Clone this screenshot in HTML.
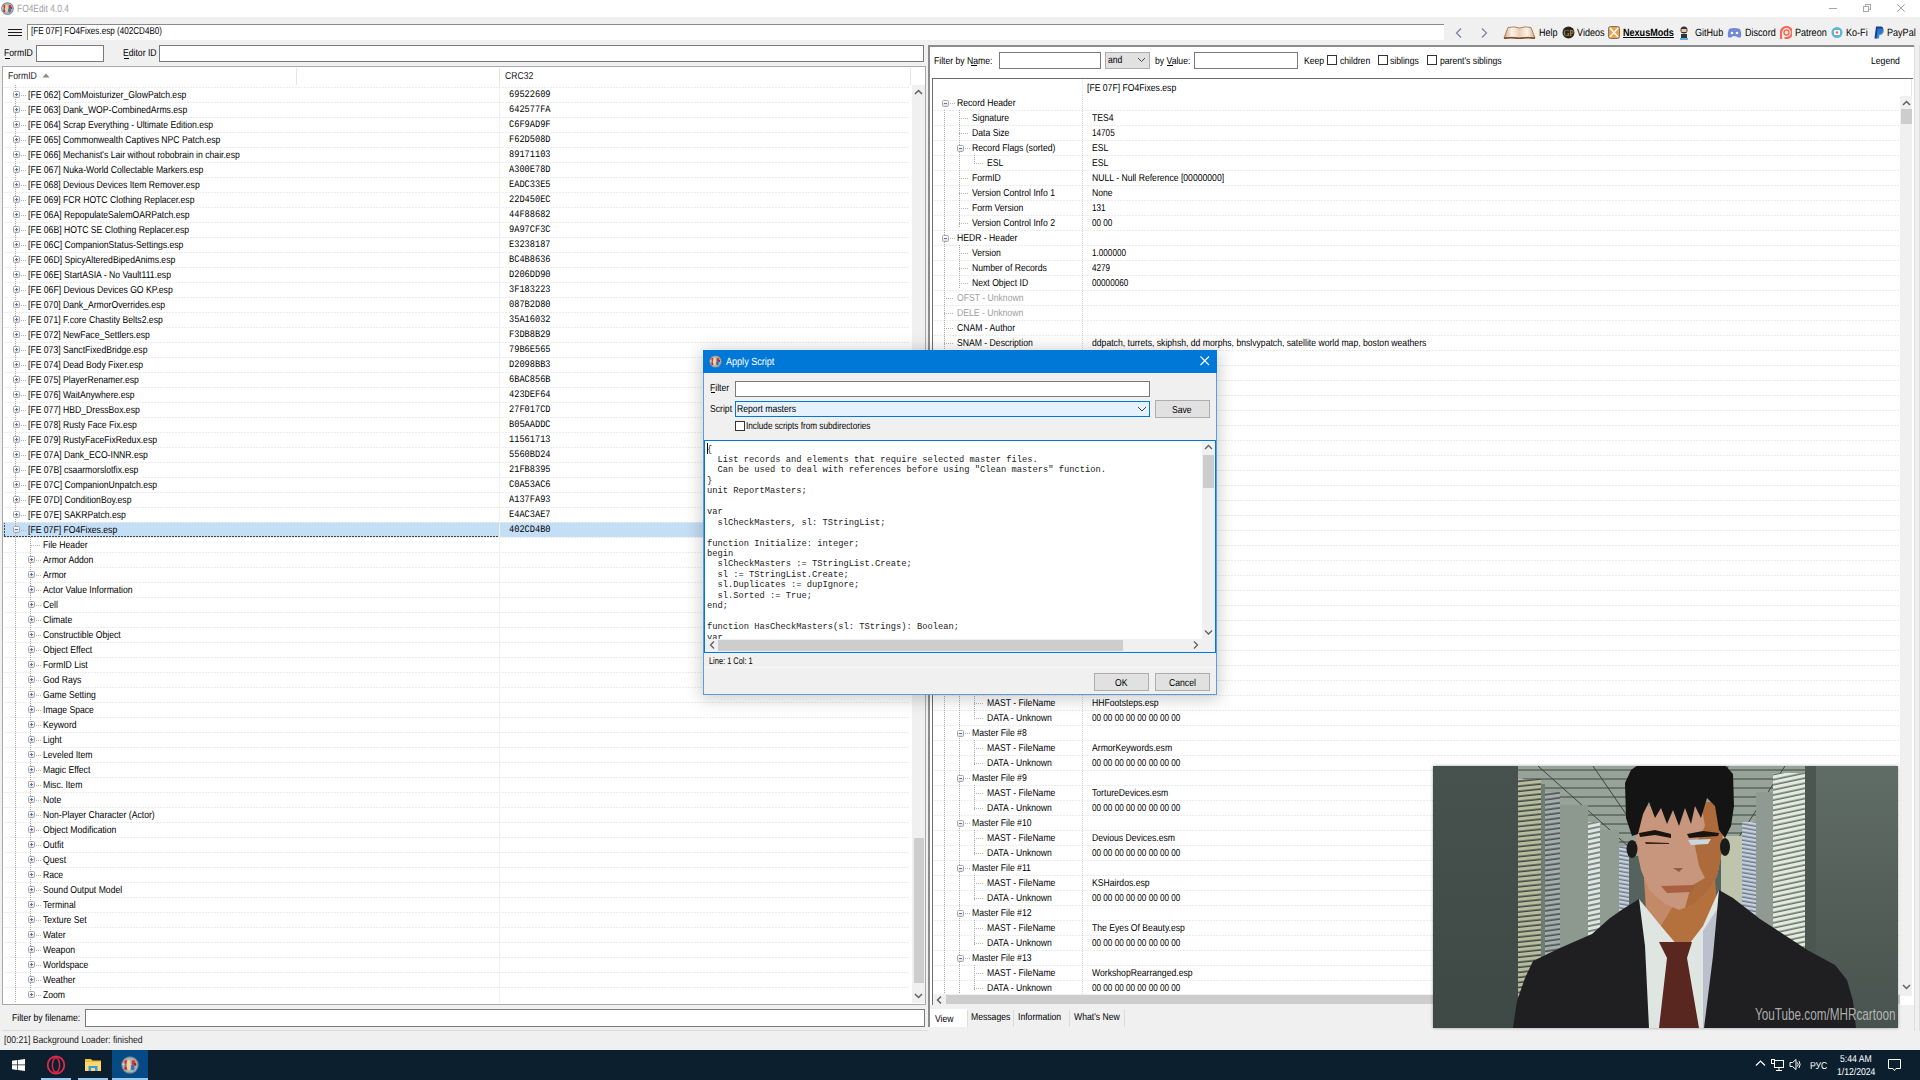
<!DOCTYPE html><html><head><meta charset="utf-8"><style>
*{margin:0;padding:0;box-sizing:border-box}
html,body{width:1920px;height:1080px;overflow:hidden;background:#f0f0f0;position:relative;font-family:"Liberation Sans",sans-serif;font-size:10px;color:#000}
.t{position:absolute;white-space:nowrap;font-size:10px;transform:scaleX(0.863);transform-origin:0 0;text-rendering:geometricPrecision;margin-top:1.4px}
.m{position:absolute;white-space:nowrap;font-family:"Liberation Mono",monospace;font-size:10px;transform:scaleX(0.865);transform-origin:0 0;color:#000;text-rendering:geometricPrecision;margin-top:0.5px}
.c{position:absolute;white-space:pre;font-family:"Liberation Mono",monospace;font-size:9px;line-height:10.45px;transform:scaleX(0.972);transform-origin:0 0;color:#222}
.inp{position:absolute;background:#fff;border:1px solid #7a7a7a}
.btn{position:absolute;background:#e1e1e1;border:1px solid #adadad}
.hd{position:absolute;height:1px;background-image:repeating-linear-gradient(90deg,#ececec 0 2px,transparent 2px 3px)}
.vd{position:absolute;width:1px;background-image:repeating-linear-gradient(180deg,#a8a8a8 0 1px,transparent 1px 2px)}
.hl{position:absolute;height:1px;background-image:repeating-linear-gradient(90deg,#b4b4b4 0 1px,transparent 1px 2px)}
.box{position:absolute;z-index:2;width:7px;height:7px;border:1px solid #a8a8a8;border-radius:1.5px;background:linear-gradient(#fff,#dedede)}
.box:before{content:"";position:absolute;left:1px;top:2px;width:3px;height:1px;background:#5a70b0}
.box.p:after{content:"";position:absolute;left:2px;top:1px;width:1px;height:3px;background:#5a70b0}
.chk{position:absolute;width:10px;height:10px;border:1px solid #333;background:#fff}
</style></head><body>
<div style="position:absolute;left:0px;top:0px;width:1920px;height:17px;background:#fff"></div>
<svg style="position:absolute;left:1px;top:2px" width="13" height="13" viewBox="0 0 26 26"><circle cx="13" cy="13" r="12.6" fill="#6f7f86"/><circle cx="13" cy="13" r="11" fill="#a3b4bc"/><rect x="5" y="6" width="4.5" height="6" rx="1.5" fill="#e22b2b"/><rect x="5" y="12" width="4.5" height="3" fill="#4a78b8"/><rect x="5" y="15" width="4.5" height="5" rx="1" fill="#d42424"/><ellipse cx="11" cy="13" rx="3" ry="8" fill="#eed69a"/><rect x="15.5" y="6" width="5" height="7" rx="2" fill="#dd3030"/><rect x="14.5" y="12.5" width="5" height="8" rx="2" fill="#3f6fb5"/><rect x="19" y="10" width="3" height="4" rx="1.5" fill="#a01818"/><circle cx="3.5" cy="12" r="2" fill="#d8c0a0"/></svg>
<div class="t" style="left:17px;top:0.5px;line-height:15px;color:#a0a0a0;font-size:10.5px;transform:scaleX(0.8)">FO4Edit 4.0.4</div>
<div style="position:absolute;left:1829px;top:7.5px;width:8px;height:1px;background:#a8a8a8"></div>
<div style="position:absolute;left:1863px;top:4px;width:8px;height:8px"><div style="position:absolute;left:2px;top:0;width:6px;height:6px;border:1px solid #a8a8a8"></div><div style="position:absolute;left:0;top:2px;width:6px;height:6px;border:1px solid #a8a8a8;background:#fff"></div></div>
<svg style="position:absolute;left:1897px;top:4px" width="8" height="8"><path d="M0.3 0.3L7.7 7.7M7.7 0.3L0.3 7.7" stroke="#a0a0a0" stroke-width="1"/></svg>
<div style="position:absolute;left:8px;top:29px;width:14px;height:1.4px;background:#1a1a1a"></div>
<div style="position:absolute;left:8px;top:32px;width:14px;height:1.4px;background:#1a1a1a"></div>
<div style="position:absolute;left:8px;top:35px;width:14px;height:1.4px;background:#1a1a1a"></div>
<div style="position:absolute;left:27px;top:24px;width:1417px;height:16px;background:#fff;border-left:1px solid #8a8a8a;border-top:1px solid #8a8a8a"></div>
<div class="t" style="left:31px;top:23px;line-height:15px;transform:scaleX(0.81)">[FE 07F] FO4Fixes.esp (402CD4B0)</div>
<svg style="position:absolute;left:1454px;top:27px" width="10" height="12"><path d="M7 1.5L2.5 6L7 10.5" stroke="#7a7fa8" stroke-width="1.2" fill="none"/></svg>
<svg style="position:absolute;left:1479px;top:27px" width="10" height="12"><path d="M3 1.5L7.5 6L3 10.5" stroke="#7a7fa8" stroke-width="1.2" fill="none"/></svg>
<svg style="position:absolute;left:1503px;top:26px" width="33" height="13" viewBox="0 0 33 13"><defs><linearGradient id="bk" x1="0" y1="0" x2="1" y2="0"><stop offset="0" stop-color="#d8a878"/><stop offset="0.25" stop-color="#fbf3ea"/><stop offset="0.5" stop-color="#e8d0b8"/><stop offset="0.75" stop-color="#fbf3ea"/><stop offset="1" stop-color="#d8a878"/></linearGradient></defs><path d="M1 12 L5 1.5 Q11 0 16.5 2 Q22 0 28 1.5 L32 12 Q24 10.5 16.5 12 Q9 10.5 1 12Z" fill="url(#bk)" stroke="#9a6840" stroke-width="0.8"/><path d="M1 12.3 Q9 11 16.5 12.6 Q24 11 32 12.3" stroke="#7a4a28" stroke-width="1.5" fill="none"/></svg>
<div class="t" style="left:1539px;top:25px;line-height:15px;font-size:10.5px">Help</div>
<svg style="position:absolute;left:1562px;top:26px" width="13" height="13"><circle cx="6.5" cy="6.5" r="6" fill="#2a2420"/><text x="6.5" y="9.5" font-size="8" text-anchor="middle" fill="#c8a860" font-family="Liberation Serif">GP</text></svg>
<div class="t" style="left:1577px;top:25px;line-height:15px;font-size:10.5px">Videos</div>
<svg style="position:absolute;left:1608px;top:26px" width="12" height="13"><rect x="0.5" y="0.5" width="11" height="12" rx="2" fill="#f5a040" stroke="#777"/><path d="M2 2L10 11M10 2L2 11" stroke="#fff" stroke-width="1.5"/></svg>
<div class="t" style="left:1623px;top:25px;line-height:15px;font-size:10.5px;font-weight:bold;text-decoration:underline">NexusMods</div>
<svg style="position:absolute;left:1678px;top:25px" width="12" height="15"><circle cx="6" cy="5" r="3.5" fill="#333"/><rect x="3.5" y="4" width="5" height="3" fill="#f0c8a8"/><rect x="3" y="9" width="6" height="4" fill="#333"/><rect x="2" y="13" width="8" height="2" fill="#5ab0e0"/></svg>
<div class="t" style="left:1695px;top:25px;line-height:15px;font-size:10.5px">GitHub</div>
<svg style="position:absolute;left:1727px;top:27px" width="15" height="11"><path d="M2 2Q7 0 13 2Q15 6 14 10Q12 11 10 10L9 9Q7.5 9.5 6 9L5 10Q3 11 1 10Q0 6 2 2Z" fill="#7289da"/><circle cx="5" cy="6" r="1.3" fill="#fff"/><circle cx="10" cy="6" r="1.3" fill="#fff"/></svg>
<div class="t" style="left:1745px;top:25px;line-height:15px;font-size:10.5px">Discord</div>
<svg style="position:absolute;left:1780px;top:26px" width="12" height="14"><path d="M1 13V6.5A5.5 5.5 0 1 1 6.5 12H4.5" fill="none" stroke="#f96854" stroke-width="2.2"/><circle cx="6.5" cy="6.5" r="2.5" fill="none" stroke="#f96854" stroke-width="1.4"/></svg>
<div class="t" style="left:1795px;top:25px;line-height:15px;font-size:10.5px">Patreon</div>
<svg style="position:absolute;left:1831px;top:26px" width="12" height="13"><circle cx="6" cy="6.5" r="5.5" fill="#5cb8d8"/><rect x="3" y="4" width="6" height="5" rx="1" fill="#fff"/><circle cx="6" cy="6.5" r="1.3" fill="#ff5e5b"/></svg>
<div class="t" style="left:1846px;top:25px;line-height:15px;font-size:10.5px">Ko-Fi</div>
<svg style="position:absolute;left:1874px;top:26px" width="10" height="13"><path d="M2 0.5H7Q10 1 9 4.5Q8 7.5 5 7.5H4L3 12.5H0.5Z" fill="#1a3a8a"/><path d="M3.5 2.5H8Q10.5 3 9.5 6Q8.5 9 6 9H5.5L4.8 12.5H2.3Z" fill="#2a80d0" opacity="0.9"/></svg>
<div class="t" style="left:1887px;top:25px;line-height:15px;font-size:10.5px">PayPal</div>
<div class="t" style="left:4px;top:45px;line-height:15px;">FormID</div>
<div style="position:absolute;left:5px;top:58px;width:5px;height:1px;background:#000"></div>
<div class="inp" style="left:36px;top:45px;width:68px;height:17px"></div>
<div class="t" style="left:123px;top:45px;line-height:15px;">Editor ID</div>
<div style="position:absolute;left:124px;top:58px;width:5px;height:1px;background:#000"></div>
<div class="inp" style="left:159px;top:45px;width:765px;height:17px"></div>
<div style="position:absolute;left:2px;top:66px;width:924px;height:939px;background:#fff;border:1px solid #a9a9a9"></div>
<div class="t" style="left:8px;top:68px;line-height:15px;color:#1a1a1a;">FormID</div>
<svg style="position:absolute;left:42px;top:73px" width="8" height="5"><path d="M0.5 4.5L4 0.5L7.5 4.5Z" fill="#888"/></svg>
<div style="position:absolute;left:296px;top:68px;width:1px;height:17px;background:#e5e5e5"></div>
<div style="position:absolute;left:499px;top:68px;width:1px;height:17px;background:#e5e5e5"></div>
<div style="position:absolute;left:910px;top:68px;width:1px;height:17px;background:#e5e5e5"></div>
<div class="t" style="left:505px;top:68px;line-height:15px;color:#1a1a1a;">CRC32</div>
<div style="position:absolute;left:3px;top:85px;width:909px;height:918px;overflow:hidden">
<div style="position:absolute;left:0px;top:437px;width:909px;height:15px;background:#c4def5"></div>
<div class="hd" style="left:1px;top:437px;width:495px;background-image:repeating-linear-gradient(90deg,#444 0 2px,transparent 2px 3px)"></div>
<div class="hd" style="left:1px;top:451px;width:495px;background-image:repeating-linear-gradient(90deg,#444 0 2px,transparent 2px 3px)"></div>
<div class="vd" style="left:1px;top:437px;height:15px;background-image:repeating-linear-gradient(180deg,#444 0 2px,transparent 2px 3px)"></div>
<div class="vd" style="left:496px;top:437px;height:15px;background-image:repeating-linear-gradient(180deg,#444 0 2px,transparent 2px 3px)"></div>
<div style="position:absolute;left:496px;top:0px;width:1px;height:918px;background:#f0f0f0"></div>
<div class="hd" style="left:1px;top:-13px;width:906px"></div>
<div class="hd" style="left:1px;top:2px;width:906px"></div>
<div class="hd" style="left:1px;top:17px;width:906px"></div>
<div class="hd" style="left:1px;top:32px;width:906px"></div>
<div class="hd" style="left:1px;top:47px;width:906px"></div>
<div class="hd" style="left:1px;top:62px;width:906px"></div>
<div class="hd" style="left:1px;top:77px;width:906px"></div>
<div class="hd" style="left:1px;top:92px;width:906px"></div>
<div class="hd" style="left:1px;top:107px;width:906px"></div>
<div class="hd" style="left:1px;top:122px;width:906px"></div>
<div class="hd" style="left:1px;top:137px;width:906px"></div>
<div class="hd" style="left:1px;top:152px;width:906px"></div>
<div class="hd" style="left:1px;top:167px;width:906px"></div>
<div class="hd" style="left:1px;top:182px;width:906px"></div>
<div class="hd" style="left:1px;top:197px;width:906px"></div>
<div class="hd" style="left:1px;top:212px;width:906px"></div>
<div class="hd" style="left:1px;top:227px;width:906px"></div>
<div class="hd" style="left:1px;top:242px;width:906px"></div>
<div class="hd" style="left:1px;top:257px;width:906px"></div>
<div class="hd" style="left:1px;top:272px;width:906px"></div>
<div class="hd" style="left:1px;top:287px;width:906px"></div>
<div class="hd" style="left:1px;top:302px;width:906px"></div>
<div class="hd" style="left:1px;top:317px;width:906px"></div>
<div class="hd" style="left:1px;top:332px;width:906px"></div>
<div class="hd" style="left:1px;top:347px;width:906px"></div>
<div class="hd" style="left:1px;top:362px;width:906px"></div>
<div class="hd" style="left:1px;top:377px;width:906px"></div>
<div class="hd" style="left:1px;top:392px;width:906px"></div>
<div class="hd" style="left:1px;top:407px;width:906px"></div>
<div class="hd" style="left:1px;top:422px;width:906px"></div>
<div class="hd" style="left:1px;top:437px;width:906px"></div>
<div class="hd" style="left:1px;top:452px;width:906px"></div>
<div class="hd" style="left:1px;top:467px;width:906px"></div>
<div class="hd" style="left:1px;top:482px;width:906px"></div>
<div class="hd" style="left:1px;top:497px;width:906px"></div>
<div class="hd" style="left:1px;top:512px;width:906px"></div>
<div class="hd" style="left:1px;top:527px;width:906px"></div>
<div class="hd" style="left:1px;top:542px;width:906px"></div>
<div class="hd" style="left:1px;top:557px;width:906px"></div>
<div class="hd" style="left:1px;top:572px;width:906px"></div>
<div class="hd" style="left:1px;top:587px;width:906px"></div>
<div class="hd" style="left:1px;top:602px;width:906px"></div>
<div class="hd" style="left:1px;top:617px;width:906px"></div>
<div class="hd" style="left:1px;top:632px;width:906px"></div>
<div class="hd" style="left:1px;top:647px;width:906px"></div>
<div class="hd" style="left:1px;top:662px;width:906px"></div>
<div class="hd" style="left:1px;top:677px;width:906px"></div>
<div class="hd" style="left:1px;top:692px;width:906px"></div>
<div class="hd" style="left:1px;top:707px;width:906px"></div>
<div class="hd" style="left:1px;top:722px;width:906px"></div>
<div class="hd" style="left:1px;top:737px;width:906px"></div>
<div class="hd" style="left:1px;top:752px;width:906px"></div>
<div class="hd" style="left:1px;top:767px;width:906px"></div>
<div class="hd" style="left:1px;top:782px;width:906px"></div>
<div class="hd" style="left:1px;top:797px;width:906px"></div>
<div class="hd" style="left:1px;top:812px;width:906px"></div>
<div class="hd" style="left:1px;top:827px;width:906px"></div>
<div class="hd" style="left:1px;top:842px;width:906px"></div>
<div class="hd" style="left:1px;top:857px;width:906px"></div>
<div class="hd" style="left:1px;top:872px;width:906px"></div>
<div class="hd" style="left:1px;top:887px;width:906px"></div>
<div class="hd" style="left:1px;top:902px;width:906px"></div>
<div class="vd" style="left:12px;top:0px;height:918px"></div>
<div class="vd" style="left:27px;top:452px;height:458px"></div>
<div class="box p" style="left:10px;top:6px"></div>
<div class="hl" style="left:18px;top:10px;width:5px"></div>
<div class="t" style="left:25px;top:2px;line-height:15px;">[FE 062] ComMoisturizer_GlowPatch.esp</div>
<div class="m" style="left:506px;top:2px;line-height:15px">69522609</div>
<div class="box p" style="left:10px;top:21px"></div>
<div class="hl" style="left:18px;top:25px;width:5px"></div>
<div class="t" style="left:25px;top:17px;line-height:15px;">[FE 063] Dank_WOP-CombinedArms.esp</div>
<div class="m" style="left:506px;top:17px;line-height:15px">642577FA</div>
<div class="box p" style="left:10px;top:36px"></div>
<div class="hl" style="left:18px;top:40px;width:5px"></div>
<div class="t" style="left:25px;top:32px;line-height:15px;">[FE 064] Scrap Everything - Ultimate Edition.esp</div>
<div class="m" style="left:506px;top:32px;line-height:15px">C6F9AD9F</div>
<div class="box p" style="left:10px;top:51px"></div>
<div class="hl" style="left:18px;top:55px;width:5px"></div>
<div class="t" style="left:25px;top:47px;line-height:15px;">[FE 065] Commonwealth Captives NPC Patch.esp</div>
<div class="m" style="left:506px;top:47px;line-height:15px">F62D508D</div>
<div class="box p" style="left:10px;top:66px"></div>
<div class="hl" style="left:18px;top:70px;width:5px"></div>
<div class="t" style="left:25px;top:62px;line-height:15px;">[FE 066] Mechanist&#x27;s Lair without robobrain in chair.esp</div>
<div class="m" style="left:506px;top:62px;line-height:15px">89171103</div>
<div class="box p" style="left:10px;top:81px"></div>
<div class="hl" style="left:18px;top:85px;width:5px"></div>
<div class="t" style="left:25px;top:77px;line-height:15px;">[FE 067] Nuka-World Collectable Markers.esp</div>
<div class="m" style="left:506px;top:77px;line-height:15px">A300E78D</div>
<div class="box p" style="left:10px;top:96px"></div>
<div class="hl" style="left:18px;top:100px;width:5px"></div>
<div class="t" style="left:25px;top:92px;line-height:15px;">[FE 068] Devious Devices Item Remover.esp</div>
<div class="m" style="left:506px;top:92px;line-height:15px">EADC33E5</div>
<div class="box p" style="left:10px;top:111px"></div>
<div class="hl" style="left:18px;top:115px;width:5px"></div>
<div class="t" style="left:25px;top:107px;line-height:15px;">[FE 069] FCR HOTC Clothing Replacer.esp</div>
<div class="m" style="left:506px;top:107px;line-height:15px">22D450EC</div>
<div class="box p" style="left:10px;top:126px"></div>
<div class="hl" style="left:18px;top:130px;width:5px"></div>
<div class="t" style="left:25px;top:122px;line-height:15px;">[FE 06A] RepopulateSalemOARPatch.esp</div>
<div class="m" style="left:506px;top:122px;line-height:15px">44F88682</div>
<div class="box p" style="left:10px;top:141px"></div>
<div class="hl" style="left:18px;top:145px;width:5px"></div>
<div class="t" style="left:25px;top:137px;line-height:15px;">[FE 06B] HOTC SE Clothing Replacer.esp</div>
<div class="m" style="left:506px;top:137px;line-height:15px">9A97CF3C</div>
<div class="box p" style="left:10px;top:156px"></div>
<div class="hl" style="left:18px;top:160px;width:5px"></div>
<div class="t" style="left:25px;top:152px;line-height:15px;">[FE 06C] CompanionStatus-Settings.esp</div>
<div class="m" style="left:506px;top:152px;line-height:15px">E3238187</div>
<div class="box p" style="left:10px;top:171px"></div>
<div class="hl" style="left:18px;top:175px;width:5px"></div>
<div class="t" style="left:25px;top:167px;line-height:15px;">[FE 06D] SpicyAlteredBipedAnims.esp</div>
<div class="m" style="left:506px;top:167px;line-height:15px">BC4B8636</div>
<div class="box p" style="left:10px;top:186px"></div>
<div class="hl" style="left:18px;top:190px;width:5px"></div>
<div class="t" style="left:25px;top:182px;line-height:15px;">[FE 06E] StartASIA - No Vault111.esp</div>
<div class="m" style="left:506px;top:182px;line-height:15px">D206DD90</div>
<div class="box p" style="left:10px;top:201px"></div>
<div class="hl" style="left:18px;top:205px;width:5px"></div>
<div class="t" style="left:25px;top:197px;line-height:15px;">[FE 06F] Devious Devices GO KP.esp</div>
<div class="m" style="left:506px;top:197px;line-height:15px">3F183223</div>
<div class="box p" style="left:10px;top:216px"></div>
<div class="hl" style="left:18px;top:220px;width:5px"></div>
<div class="t" style="left:25px;top:212px;line-height:15px;">[FE 070] Dank_ArmorOverrides.esp</div>
<div class="m" style="left:506px;top:212px;line-height:15px">087B2D80</div>
<div class="box p" style="left:10px;top:231px"></div>
<div class="hl" style="left:18px;top:235px;width:5px"></div>
<div class="t" style="left:25px;top:227px;line-height:15px;">[FE 071] F.core Chastity Belts2.esp</div>
<div class="m" style="left:506px;top:227px;line-height:15px">35A16032</div>
<div class="box p" style="left:10px;top:246px"></div>
<div class="hl" style="left:18px;top:250px;width:5px"></div>
<div class="t" style="left:25px;top:242px;line-height:15px;">[FE 072] NewFace_Settlers.esp</div>
<div class="m" style="left:506px;top:242px;line-height:15px">F3DB8B29</div>
<div class="box p" style="left:10px;top:261px"></div>
<div class="hl" style="left:18px;top:265px;width:5px"></div>
<div class="t" style="left:25px;top:257px;line-height:15px;">[FE 073] SanctFixedBridge.esp</div>
<div class="m" style="left:506px;top:257px;line-height:15px">79B6E565</div>
<div class="box p" style="left:10px;top:276px"></div>
<div class="hl" style="left:18px;top:280px;width:5px"></div>
<div class="t" style="left:25px;top:272px;line-height:15px;">[FE 074] Dead Body Fixer.esp</div>
<div class="m" style="left:506px;top:272px;line-height:15px">D2098BB3</div>
<div class="box p" style="left:10px;top:291px"></div>
<div class="hl" style="left:18px;top:295px;width:5px"></div>
<div class="t" style="left:25px;top:287px;line-height:15px;">[FE 075] PlayerRenamer.esp</div>
<div class="m" style="left:506px;top:287px;line-height:15px">6BAC856B</div>
<div class="box p" style="left:10px;top:306px"></div>
<div class="hl" style="left:18px;top:310px;width:5px"></div>
<div class="t" style="left:25px;top:302px;line-height:15px;">[FE 076] WaitAnywhere.esp</div>
<div class="m" style="left:506px;top:302px;line-height:15px">423DEF64</div>
<div class="box p" style="left:10px;top:321px"></div>
<div class="hl" style="left:18px;top:325px;width:5px"></div>
<div class="t" style="left:25px;top:317px;line-height:15px;">[FE 077] HBD_DressBox.esp</div>
<div class="m" style="left:506px;top:317px;line-height:15px">27F017CD</div>
<div class="box p" style="left:10px;top:336px"></div>
<div class="hl" style="left:18px;top:340px;width:5px"></div>
<div class="t" style="left:25px;top:332px;line-height:15px;">[FE 078] Rusty Face Fix.esp</div>
<div class="m" style="left:506px;top:332px;line-height:15px">B05AADDC</div>
<div class="box p" style="left:10px;top:351px"></div>
<div class="hl" style="left:18px;top:355px;width:5px"></div>
<div class="t" style="left:25px;top:347px;line-height:15px;">[FE 079] RustyFaceFixRedux.esp</div>
<div class="m" style="left:506px;top:347px;line-height:15px">11561713</div>
<div class="box p" style="left:10px;top:366px"></div>
<div class="hl" style="left:18px;top:370px;width:5px"></div>
<div class="t" style="left:25px;top:362px;line-height:15px;">[FE 07A] Dank_ECO-INNR.esp</div>
<div class="m" style="left:506px;top:362px;line-height:15px">5560BD24</div>
<div class="box p" style="left:10px;top:381px"></div>
<div class="hl" style="left:18px;top:385px;width:5px"></div>
<div class="t" style="left:25px;top:377px;line-height:15px;">[FE 07B] csaarmorslotfix.esp</div>
<div class="m" style="left:506px;top:377px;line-height:15px">21FB8395</div>
<div class="box p" style="left:10px;top:396px"></div>
<div class="hl" style="left:18px;top:400px;width:5px"></div>
<div class="t" style="left:25px;top:392px;line-height:15px;">[FE 07C] CompanionUnpatch.esp</div>
<div class="m" style="left:506px;top:392px;line-height:15px">C0A53AC6</div>
<div class="box p" style="left:10px;top:411px"></div>
<div class="hl" style="left:18px;top:415px;width:5px"></div>
<div class="t" style="left:25px;top:407px;line-height:15px;">[FE 07D] ConditionBoy.esp</div>
<div class="m" style="left:506px;top:407px;line-height:15px">A137FA93</div>
<div class="box p" style="left:10px;top:426px"></div>
<div class="hl" style="left:18px;top:430px;width:5px"></div>
<div class="t" style="left:25px;top:422px;line-height:15px;">[FE 07E] SAKRPatch.esp</div>
<div class="m" style="left:506px;top:422px;line-height:15px">E4AC3AE7</div>
<div class="box" style="left:10px;top:441px"></div>
<div class="hl" style="left:18px;top:445px;width:5px"></div>
<div class="t" style="left:25px;top:437px;line-height:15px;">[FE 07F] FO4Fixes.esp</div>
<div class="m" style="left:506px;top:437px;line-height:15px">402CD4B0</div>
<div class="hl" style="left:28px;top:460px;width:10px"></div>
<div class="t" style="left:40px;top:452px;line-height:15px;">File Header</div>
<div class="box p" style="left:25px;top:471px"></div>
<div class="hl" style="left:33px;top:475px;width:5px"></div>
<div class="t" style="left:40px;top:467px;line-height:15px;">Armor Addon</div>
<div class="box p" style="left:25px;top:486px"></div>
<div class="hl" style="left:33px;top:490px;width:5px"></div>
<div class="t" style="left:40px;top:482px;line-height:15px;">Armor</div>
<div class="box p" style="left:25px;top:501px"></div>
<div class="hl" style="left:33px;top:505px;width:5px"></div>
<div class="t" style="left:40px;top:497px;line-height:15px;">Actor Value Information</div>
<div class="box p" style="left:25px;top:516px"></div>
<div class="hl" style="left:33px;top:520px;width:5px"></div>
<div class="t" style="left:40px;top:512px;line-height:15px;">Cell</div>
<div class="box p" style="left:25px;top:531px"></div>
<div class="hl" style="left:33px;top:535px;width:5px"></div>
<div class="t" style="left:40px;top:527px;line-height:15px;">Climate</div>
<div class="box p" style="left:25px;top:546px"></div>
<div class="hl" style="left:33px;top:550px;width:5px"></div>
<div class="t" style="left:40px;top:542px;line-height:15px;">Constructible Object</div>
<div class="box p" style="left:25px;top:561px"></div>
<div class="hl" style="left:33px;top:565px;width:5px"></div>
<div class="t" style="left:40px;top:557px;line-height:15px;">Object Effect</div>
<div class="box p" style="left:25px;top:576px"></div>
<div class="hl" style="left:33px;top:580px;width:5px"></div>
<div class="t" style="left:40px;top:572px;line-height:15px;">FormID List</div>
<div class="box p" style="left:25px;top:591px"></div>
<div class="hl" style="left:33px;top:595px;width:5px"></div>
<div class="t" style="left:40px;top:587px;line-height:15px;">God Rays</div>
<div class="box p" style="left:25px;top:606px"></div>
<div class="hl" style="left:33px;top:610px;width:5px"></div>
<div class="t" style="left:40px;top:602px;line-height:15px;">Game Setting</div>
<div class="box p" style="left:25px;top:621px"></div>
<div class="hl" style="left:33px;top:625px;width:5px"></div>
<div class="t" style="left:40px;top:617px;line-height:15px;">Image Space</div>
<div class="box p" style="left:25px;top:636px"></div>
<div class="hl" style="left:33px;top:640px;width:5px"></div>
<div class="t" style="left:40px;top:632px;line-height:15px;">Keyword</div>
<div class="box p" style="left:25px;top:651px"></div>
<div class="hl" style="left:33px;top:655px;width:5px"></div>
<div class="t" style="left:40px;top:647px;line-height:15px;">Light</div>
<div class="box p" style="left:25px;top:666px"></div>
<div class="hl" style="left:33px;top:670px;width:5px"></div>
<div class="t" style="left:40px;top:662px;line-height:15px;">Leveled Item</div>
<div class="box p" style="left:25px;top:681px"></div>
<div class="hl" style="left:33px;top:685px;width:5px"></div>
<div class="t" style="left:40px;top:677px;line-height:15px;">Magic Effect</div>
<div class="box p" style="left:25px;top:696px"></div>
<div class="hl" style="left:33px;top:700px;width:5px"></div>
<div class="t" style="left:40px;top:692px;line-height:15px;">Misc. Item</div>
<div class="box p" style="left:25px;top:711px"></div>
<div class="hl" style="left:33px;top:715px;width:5px"></div>
<div class="t" style="left:40px;top:707px;line-height:15px;">Note</div>
<div class="box p" style="left:25px;top:726px"></div>
<div class="hl" style="left:33px;top:730px;width:5px"></div>
<div class="t" style="left:40px;top:722px;line-height:15px;">Non-Player Character (Actor)</div>
<div class="box p" style="left:25px;top:741px"></div>
<div class="hl" style="left:33px;top:745px;width:5px"></div>
<div class="t" style="left:40px;top:737px;line-height:15px;">Object Modification</div>
<div class="box p" style="left:25px;top:756px"></div>
<div class="hl" style="left:33px;top:760px;width:5px"></div>
<div class="t" style="left:40px;top:752px;line-height:15px;">Outfit</div>
<div class="box p" style="left:25px;top:771px"></div>
<div class="hl" style="left:33px;top:775px;width:5px"></div>
<div class="t" style="left:40px;top:767px;line-height:15px;">Quest</div>
<div class="box p" style="left:25px;top:786px"></div>
<div class="hl" style="left:33px;top:790px;width:5px"></div>
<div class="t" style="left:40px;top:782px;line-height:15px;">Race</div>
<div class="box p" style="left:25px;top:801px"></div>
<div class="hl" style="left:33px;top:805px;width:5px"></div>
<div class="t" style="left:40px;top:797px;line-height:15px;">Sound Output Model</div>
<div class="box p" style="left:25px;top:816px"></div>
<div class="hl" style="left:33px;top:820px;width:5px"></div>
<div class="t" style="left:40px;top:812px;line-height:15px;">Terminal</div>
<div class="box p" style="left:25px;top:831px"></div>
<div class="hl" style="left:33px;top:835px;width:5px"></div>
<div class="t" style="left:40px;top:827px;line-height:15px;">Texture Set</div>
<div class="box p" style="left:25px;top:846px"></div>
<div class="hl" style="left:33px;top:850px;width:5px"></div>
<div class="t" style="left:40px;top:842px;line-height:15px;">Water</div>
<div class="box p" style="left:25px;top:861px"></div>
<div class="hl" style="left:33px;top:865px;width:5px"></div>
<div class="t" style="left:40px;top:857px;line-height:15px;">Weapon</div>
<div class="box p" style="left:25px;top:876px"></div>
<div class="hl" style="left:33px;top:880px;width:5px"></div>
<div class="t" style="left:40px;top:872px;line-height:15px;">Worldspace</div>
<div class="box p" style="left:25px;top:891px"></div>
<div class="hl" style="left:33px;top:895px;width:5px"></div>
<div class="t" style="left:40px;top:887px;line-height:15px;">Weather</div>
<div class="box p" style="left:25px;top:906px"></div>
<div class="hl" style="left:33px;top:910px;width:5px"></div>
<div class="t" style="left:40px;top:902px;line-height:15px;">Zoom</div>
</div>
<div style="position:absolute;left:912px;top:85px;width:13px;height:918px;background:#f0f0f0"></div>
<svg style="position:absolute;left:913px;top:87px" width="11" height="10"><path d="M2 7L5.5 3.5L9 7" stroke="#606060" stroke-width="1.5" fill="none"/></svg>
<div style="position:absolute;left:914px;top:838px;width:10px;height:145px;background:#cdcdcd"></div>
<svg style="position:absolute;left:913px;top:991px" width="11" height="10"><path d="M2 3L5.5 6.5L9 3" stroke="#606060" stroke-width="1.5" fill="none"/></svg>
<div class="t" style="left:12px;top:1010px;line-height:15px;">Filter by filename:</div>
<div class="inp" style="left:85px;top:1009px;width:840px;height:18px"></div>
<div style="position:absolute;left:2px;top:1030px;width:926px;height:1px;background:#dcdcdc"></div>
<div class="t" style="left:4px;top:1032px;line-height:15px;color:#1a1a1a;">[00:21] Background Loader: finished</div>
<div style="position:absolute;left:928px;top:45px;width:992px;height:982px;border-left:2px solid #8c8c8c;border-top:2px solid #8c8c8c;background:#fff"></div>
<div style="position:absolute;left:1914px;top:45px;width:6px;height:986px;background:#f0f0f0;border-left:1px solid #ddd;border-right:1px solid #ddd"></div>
<div class="t" style="left:934px;top:53px;line-height:15px;">Filter by Name:</div>
<div style="position:absolute;left:971px;top:65px;width:6px;height:1px;background:#000"></div>
<div class="inp" style="left:999px;top:52px;width:102px;height:17px"></div>
<div class="btn" style="left:1105px;top:52px;width:45px;height:17px"></div>
<div class="t" style="left:1108px;top:52px;line-height:15px;">and</div>
<svg style="position:absolute;left:1137px;top:57px" width="9" height="6"><path d="M1 1L4.5 4.5L8 1" stroke="#444" stroke-width="1" fill="none"/></svg>
<div class="t" style="left:1155px;top:53px;line-height:15px;">by Value:</div>
<div style="position:absolute;left:1167px;top:65px;width:6px;height:1px;background:#000"></div>
<div class="inp" style="left:1194px;top:52px;width:104px;height:17px"></div>
<div class="t" style="left:1304px;top:53px;line-height:15px;">Keep</div>
<div class="chk" style="left:1327px;top:55px"></div>
<div class="t" style="left:1340px;top:53px;line-height:15px;">children</div>
<div class="chk" style="left:1378px;top:55px"></div>
<div class="t" style="left:1390px;top:53px;line-height:15px;">siblings</div>
<div class="chk" style="left:1427px;top:55px"></div>
<div class="t" style="left:1440px;top:53px;line-height:15px;">parent&#x27;s siblings</div>
<div class="t" style="left:1871px;top:53px;line-height:15px;">Legend</div>
<div style="position:absolute;left:932px;top:78px;width:981px;height:927px;background:#fff;border-left:1px solid #6d6d6d;border-top:1px solid #6d6d6d"></div>
<div class="t" style="left:1087px;top:80px;line-height:15px;">[FE 07F] FO4Fixes.esp</div>
<div style="position:absolute;left:1082px;top:79px;width:1px;height:16px;background:#eee"></div>
<div style="position:absolute;left:1911px;top:79px;width:1px;height:17px;background:#e5e5e5"></div>
<div style="position:absolute;left:933px;top:79px;width:967px;height:915px;overflow:hidden">
<div class="hd" style="left:1px;top:31px;width:966px"></div>
<div class="box" style="left:9px;top:21px"></div>
<div class="hl" style="left:17px;top:24px;width:5px"></div>
<div class="t" style="left:24px;top:16px;line-height:15px;">Record Header</div>
<div class="hd" style="left:1px;top:46px;width:966px"></div>
<div class="hl" style="left:26px;top:39px;width:9px"></div>
<div class="t" style="left:39px;top:31px;line-height:15px;">Signature</div>
<div class="t" style="left:159px;top:31px;line-height:15px;">TES4</div>
<div class="hd" style="left:1px;top:61px;width:966px"></div>
<div class="hl" style="left:26px;top:54px;width:9px"></div>
<div class="t" style="left:39px;top:46px;line-height:15px;">Data Size</div>
<div class="t" style="left:159px;top:46px;line-height:15px;transform:scaleX(0.815)">14705</div>
<div class="hd" style="left:1px;top:76px;width:966px"></div>
<div class="box" style="left:24px;top:66px"></div>
<div class="hl" style="left:32px;top:69px;width:5px"></div>
<div class="t" style="left:39px;top:61px;line-height:15px;">Record Flags (sorted)</div>
<div class="t" style="left:159px;top:61px;line-height:15px;">ESL</div>
<div class="hd" style="left:1px;top:91px;width:966px"></div>
<div class="hl" style="left:41px;top:84px;width:9px"></div>
<div class="t" style="left:54px;top:76px;line-height:15px;">ESL</div>
<div class="t" style="left:159px;top:76px;line-height:15px;">ESL</div>
<div class="hd" style="left:1px;top:106px;width:966px"></div>
<div class="hl" style="left:26px;top:99px;width:9px"></div>
<div class="t" style="left:39px;top:91px;line-height:15px;">FormID</div>
<div class="t" style="left:159px;top:91px;line-height:15px;">NULL - Null Reference [00000000]</div>
<div class="hd" style="left:1px;top:121px;width:966px"></div>
<div class="hl" style="left:26px;top:114px;width:9px"></div>
<div class="t" style="left:39px;top:106px;line-height:15px;">Version Control Info 1</div>
<div class="t" style="left:159px;top:106px;line-height:15px;">None</div>
<div class="hd" style="left:1px;top:136px;width:966px"></div>
<div class="hl" style="left:26px;top:129px;width:9px"></div>
<div class="t" style="left:39px;top:121px;line-height:15px;">Form Version</div>
<div class="t" style="left:159px;top:121px;line-height:15px;transform:scaleX(0.815)">131</div>
<div class="hd" style="left:1px;top:151px;width:966px"></div>
<div class="hl" style="left:26px;top:144px;width:9px"></div>
<div class="t" style="left:39px;top:136px;line-height:15px;">Version Control Info 2</div>
<div class="t" style="left:159px;top:136px;line-height:15px;transform:scaleX(0.815)">00 00</div>
<div class="hd" style="left:1px;top:166px;width:966px"></div>
<div class="box" style="left:9px;top:156px"></div>
<div class="hl" style="left:17px;top:159px;width:5px"></div>
<div class="t" style="left:24px;top:151px;line-height:15px;">HEDR - Header</div>
<div class="hd" style="left:1px;top:181px;width:966px"></div>
<div class="hl" style="left:26px;top:174px;width:9px"></div>
<div class="t" style="left:39px;top:166px;line-height:15px;">Version</div>
<div class="t" style="left:159px;top:166px;line-height:15px;transform:scaleX(0.815)">1.000000</div>
<div class="hd" style="left:1px;top:196px;width:966px"></div>
<div class="hl" style="left:26px;top:189px;width:9px"></div>
<div class="t" style="left:39px;top:181px;line-height:15px;">Number of Records</div>
<div class="t" style="left:159px;top:181px;line-height:15px;transform:scaleX(0.815)">4279</div>
<div class="hd" style="left:1px;top:211px;width:966px"></div>
<div class="hl" style="left:26px;top:204px;width:9px"></div>
<div class="t" style="left:39px;top:196px;line-height:15px;">Next Object ID</div>
<div class="t" style="left:159px;top:196px;line-height:15px;transform:scaleX(0.815)">00000060</div>
<div class="hd" style="left:1px;top:226px;width:966px"></div>
<div class="hl" style="left:11px;top:219px;width:9px"></div>
<div class="t" style="left:24px;top:211px;line-height:15px;color:#a0a0a0;">OFST - Unknown</div>
<div class="hd" style="left:1px;top:241px;width:966px"></div>
<div class="hl" style="left:11px;top:234px;width:9px"></div>
<div class="t" style="left:24px;top:226px;line-height:15px;color:#a0a0a0;">DELE - Unknown</div>
<div class="hd" style="left:1px;top:256px;width:966px"></div>
<div class="hl" style="left:11px;top:249px;width:9px"></div>
<div class="t" style="left:24px;top:241px;line-height:15px;">CNAM - Author</div>
<div class="hd" style="left:1px;top:271px;width:966px"></div>
<div class="hl" style="left:11px;top:264px;width:9px"></div>
<div class="t" style="left:24px;top:256px;line-height:15px;">SNAM - Description</div>
<div class="t" style="left:159px;top:256px;line-height:15px;">ddpatch, turrets, skiphsh, dd morphs, bnslvypatch, satellite world map, boston weathers</div>
<div class="hd" style="left:1px;top:286px;width:966px"></div>
<div class="hd" style="left:1px;top:301px;width:966px"></div>
<div class="hd" style="left:1px;top:316px;width:966px"></div>
<div class="hd" style="left:1px;top:331px;width:966px"></div>
<div class="hd" style="left:1px;top:346px;width:966px"></div>
<div class="hd" style="left:1px;top:361px;width:966px"></div>
<div class="hd" style="left:1px;top:376px;width:966px"></div>
<div class="hd" style="left:1px;top:391px;width:966px"></div>
<div class="hd" style="left:1px;top:406px;width:966px"></div>
<div class="hd" style="left:1px;top:421px;width:966px"></div>
<div class="hd" style="left:1px;top:436px;width:966px"></div>
<div class="hd" style="left:1px;top:451px;width:966px"></div>
<div class="hd" style="left:1px;top:466px;width:966px"></div>
<div class="hd" style="left:1px;top:481px;width:966px"></div>
<div class="hd" style="left:1px;top:496px;width:966px"></div>
<div class="hd" style="left:1px;top:511px;width:966px"></div>
<div class="hd" style="left:1px;top:526px;width:966px"></div>
<div class="hd" style="left:1px;top:541px;width:966px"></div>
<div class="hd" style="left:1px;top:556px;width:966px"></div>
<div class="hd" style="left:1px;top:571px;width:966px"></div>
<div class="hd" style="left:1px;top:586px;width:966px"></div>
<div class="hd" style="left:1px;top:601px;width:966px"></div>
<div class="hd" style="left:1px;top:616px;width:966px"></div>
<div class="hd" style="left:1px;top:631px;width:966px"></div>
<div class="hl" style="left:41px;top:624px;width:9px"></div>
<div class="t" style="left:54px;top:616px;line-height:15px;">MAST - FileName</div>
<div class="t" style="left:159px;top:616px;line-height:15px;">HHFootsteps.esp</div>
<div class="hd" style="left:1px;top:646px;width:966px"></div>
<div class="hl" style="left:41px;top:639px;width:9px"></div>
<div class="t" style="left:54px;top:631px;line-height:15px;">DATA - Unknown</div>
<div class="t" style="left:159px;top:631px;line-height:15px;transform:scaleX(0.815)">00 00 00 00 00 00 00 00</div>
<div class="hd" style="left:1px;top:661px;width:966px"></div>
<div class="box" style="left:24px;top:651px"></div>
<div class="hl" style="left:32px;top:654px;width:5px"></div>
<div class="t" style="left:39px;top:646px;line-height:15px;">Master File #8</div>
<div class="hd" style="left:1px;top:676px;width:966px"></div>
<div class="hl" style="left:41px;top:669px;width:9px"></div>
<div class="t" style="left:54px;top:661px;line-height:15px;">MAST - FileName</div>
<div class="t" style="left:159px;top:661px;line-height:15px;">ArmorKeywords.esm</div>
<div class="hd" style="left:1px;top:691px;width:966px"></div>
<div class="hl" style="left:41px;top:684px;width:9px"></div>
<div class="t" style="left:54px;top:676px;line-height:15px;">DATA - Unknown</div>
<div class="t" style="left:159px;top:676px;line-height:15px;transform:scaleX(0.815)">00 00 00 00 00 00 00 00</div>
<div class="hd" style="left:1px;top:706px;width:966px"></div>
<div class="box" style="left:24px;top:696px"></div>
<div class="hl" style="left:32px;top:699px;width:5px"></div>
<div class="t" style="left:39px;top:691px;line-height:15px;">Master File #9</div>
<div class="hd" style="left:1px;top:721px;width:966px"></div>
<div class="hl" style="left:41px;top:714px;width:9px"></div>
<div class="t" style="left:54px;top:706px;line-height:15px;">MAST - FileName</div>
<div class="t" style="left:159px;top:706px;line-height:15px;">TortureDevices.esm</div>
<div class="hd" style="left:1px;top:736px;width:966px"></div>
<div class="hl" style="left:41px;top:729px;width:9px"></div>
<div class="t" style="left:54px;top:721px;line-height:15px;">DATA - Unknown</div>
<div class="t" style="left:159px;top:721px;line-height:15px;transform:scaleX(0.815)">00 00 00 00 00 00 00 00</div>
<div class="hd" style="left:1px;top:751px;width:966px"></div>
<div class="box" style="left:24px;top:741px"></div>
<div class="hl" style="left:32px;top:744px;width:5px"></div>
<div class="t" style="left:39px;top:736px;line-height:15px;">Master File #10</div>
<div class="hd" style="left:1px;top:766px;width:966px"></div>
<div class="hl" style="left:41px;top:759px;width:9px"></div>
<div class="t" style="left:54px;top:751px;line-height:15px;">MAST - FileName</div>
<div class="t" style="left:159px;top:751px;line-height:15px;">Devious Devices.esm</div>
<div class="hd" style="left:1px;top:781px;width:966px"></div>
<div class="hl" style="left:41px;top:774px;width:9px"></div>
<div class="t" style="left:54px;top:766px;line-height:15px;">DATA - Unknown</div>
<div class="t" style="left:159px;top:766px;line-height:15px;transform:scaleX(0.815)">00 00 00 00 00 00 00 00</div>
<div class="hd" style="left:1px;top:796px;width:966px"></div>
<div class="box" style="left:24px;top:786px"></div>
<div class="hl" style="left:32px;top:789px;width:5px"></div>
<div class="t" style="left:39px;top:781px;line-height:15px;">Master File #11</div>
<div class="hd" style="left:1px;top:811px;width:966px"></div>
<div class="hl" style="left:41px;top:804px;width:9px"></div>
<div class="t" style="left:54px;top:796px;line-height:15px;">MAST - FileName</div>
<div class="t" style="left:159px;top:796px;line-height:15px;">KSHairdos.esp</div>
<div class="hd" style="left:1px;top:826px;width:966px"></div>
<div class="hl" style="left:41px;top:819px;width:9px"></div>
<div class="t" style="left:54px;top:811px;line-height:15px;">DATA - Unknown</div>
<div class="t" style="left:159px;top:811px;line-height:15px;transform:scaleX(0.815)">00 00 00 00 00 00 00 00</div>
<div class="hd" style="left:1px;top:841px;width:966px"></div>
<div class="box" style="left:24px;top:831px"></div>
<div class="hl" style="left:32px;top:834px;width:5px"></div>
<div class="t" style="left:39px;top:826px;line-height:15px;">Master File #12</div>
<div class="hd" style="left:1px;top:856px;width:966px"></div>
<div class="hl" style="left:41px;top:849px;width:9px"></div>
<div class="t" style="left:54px;top:841px;line-height:15px;">MAST - FileName</div>
<div class="t" style="left:159px;top:841px;line-height:15px;">The Eyes Of Beauty.esp</div>
<div class="hd" style="left:1px;top:871px;width:966px"></div>
<div class="hl" style="left:41px;top:864px;width:9px"></div>
<div class="t" style="left:54px;top:856px;line-height:15px;">DATA - Unknown</div>
<div class="t" style="left:159px;top:856px;line-height:15px;transform:scaleX(0.815)">00 00 00 00 00 00 00 00</div>
<div class="hd" style="left:1px;top:886px;width:966px"></div>
<div class="box" style="left:24px;top:876px"></div>
<div class="hl" style="left:32px;top:879px;width:5px"></div>
<div class="t" style="left:39px;top:871px;line-height:15px;">Master File #13</div>
<div class="hd" style="left:1px;top:901px;width:966px"></div>
<div class="hl" style="left:41px;top:894px;width:9px"></div>
<div class="t" style="left:54px;top:886px;line-height:15px;">MAST - FileName</div>
<div class="t" style="left:159px;top:886px;line-height:15px;">WorkshopRearranged.esp</div>
<div class="hd" style="left:1px;top:916px;width:966px"></div>
<div class="hl" style="left:41px;top:909px;width:9px"></div>
<div class="t" style="left:54px;top:901px;line-height:15px;">DATA - Unknown</div>
<div class="t" style="left:159px;top:901px;line-height:15px;transform:scaleX(0.815)">00 00 00 00 00 00 00 00</div>
<div class="vd" style="left:11px;top:31px;height:900px"></div>
<div class="vd" style="left:26px;top:31px;height:118px"></div>
<div class="vd" style="left:41px;top:76px;height:9px"></div>
<div class="vd" style="left:26px;top:166px;height:43px"></div>
<div class="vd" style="left:26px;top:611px;height:320px"></div>
<div class="vd" style="left:41px;top:611px;height:30px"></div>
<div class="vd" style="left:41px;top:661px;height:25px"></div>
<div class="vd" style="left:41px;top:706px;height:25px"></div>
<div class="vd" style="left:41px;top:751px;height:25px"></div>
<div class="vd" style="left:41px;top:796px;height:25px"></div>
<div class="vd" style="left:41px;top:841px;height:25px"></div>
<div class="vd" style="left:41px;top:886px;height:25px"></div>
<div class="vd" style="left:149px;top:16px;height:910px;opacity:.5"></div>
</div>
<div style="position:absolute;left:1900px;top:96px;width:12px;height:900px;background:#f0f0f0"></div>
<svg style="position:absolute;left:1901px;top:98px" width="11" height="10"><path d="M2 7L5.5 3.5L9 7" stroke="#606060" stroke-width="1.5" fill="none"/></svg>
<div style="position:absolute;left:1901px;top:109px;width:11px;height:15px;background:#cdcdcd"></div>
<svg style="position:absolute;left:1901px;top:982px" width="11" height="10"><path d="M2 3L5.5 6.5L9 3" stroke="#606060" stroke-width="1.5" fill="none"/></svg>
<div style="position:absolute;left:933px;top:994px;width:967px;height:11px;background:#f0f0f0"></div>
<svg style="position:absolute;left:935px;top:995px" width="9" height="10"><path d="M6 1.5L2.5 5L6 8.5" stroke="#606060" stroke-width="1.5" fill="none"/></svg>
<div style="position:absolute;left:946px;top:995px;width:954px;height:9px;background:#cdcdcd"></div>
<div style="position:absolute;left:930px;top:1005px;width:984px;height:22px;background:#f0f0f0"></div>
<div style="position:absolute;left:930px;top:1009px;width:37px;height:18px;background:#fff"></div>
<div class="t" style="left:935px;top:1011px;line-height:15px;">View</div>
<div style="position:absolute;left:967px;top:1010px;width:1px;height:17px;background:#dcdcdc"></div>
<div class="t" style="left:971px;top:1009px;line-height:15px;">Messages</div>
<div style="position:absolute;left:1013px;top:1010px;width:1px;height:17px;background:#dcdcdc"></div>
<div class="t" style="left:1018px;top:1009px;line-height:15px;">Information</div>
<div style="position:absolute;left:1069px;top:1010px;width:1px;height:17px;background:#dcdcdc"></div>
<div class="t" style="left:1074px;top:1009px;line-height:15px;">What&#x27;s New</div>
<div style="position:absolute;left:1124px;top:1010px;width:1px;height:17px;background:#dcdcdc"></div>
<div style="position:absolute;left:0px;top:1050px;width:1920px;height:30px;background:#0c1f2e"></div>
<svg style="position:absolute;left:12px;top:1059px" width="13" height="12"><path d="M0 1.7L5.3 1V5.6H0Z M6 0.9L13 0V5.6H6Z M0 6.3H5.3V11L0 10.3Z M6 6.3H13V12L6 11.1Z" fill="#fff"/></svg>
<div style="position:absolute;left:41px;top:1078px;width:30px;height:2px;background:#9ac8ec"></div>
<svg style="position:absolute;left:46px;top:1055px" width="20" height="20"><ellipse cx="10" cy="10" rx="8.3" ry="8.5" fill="none" stroke="#e0284a" stroke-width="1.8"/><ellipse cx="10" cy="10" rx="3.6" ry="7.3" fill="none" stroke="#e0284a" stroke-width="1.4"/></svg>
<div style="position:absolute;left:78px;top:1078px;width:30px;height:2px;background:#9ac8ec"></div>
<svg style="position:absolute;left:85px;top:1058px" width="17" height="14"><path d="M0 1H6L7.5 2.5H16V13H0Z" fill="#f0c040"/><rect x="0" y="4" width="16" height="9" fill="#ffd868"/><rect x="3.5" y="8" width="9" height="5" fill="#3a9ae8"/><rect x="6" y="10" width="4" height="3" fill="#ffd868"/></svg>
<div style="position:absolute;left:112px;top:1050px;width:36px;height:30px;background:#054a84"></div>
<div style="position:absolute;left:112px;top:1078px;width:36px;height:2px;background:#9ac8ec"></div>
<svg style="position:absolute;left:121px;top:1056px" width="18" height="18" viewBox="0 0 26 26"><circle cx="13" cy="13" r="12.6" fill="#6f7f86"/><circle cx="13" cy="13" r="11" fill="#a3b4bc"/><rect x="5" y="6" width="4.5" height="6" rx="1.5" fill="#e22b2b"/><rect x="5" y="12" width="4.5" height="3" fill="#4a78b8"/><rect x="5" y="15" width="4.5" height="5" rx="1" fill="#d42424"/><ellipse cx="11" cy="13" rx="3" ry="8" fill="#eed69a"/><rect x="15.5" y="6" width="5" height="7" rx="2" fill="#dd3030"/><rect x="14.5" y="12.5" width="5" height="8" rx="2" fill="#3f6fb5"/><rect x="19" y="10" width="3" height="4" rx="1.5" fill="#a01818"/><circle cx="3.5" cy="12" r="2" fill="#d8c0a0"/></svg>
<svg style="position:absolute;left:1755px;top:1059px" width="11" height="8"><path d="M1 6.5L5.5 2L10 6.5" stroke="#fff" stroke-width="1.2" fill="none"/></svg>
<svg style="position:absolute;left:1771px;top:1059px" width="14" height="13"><rect x="3.5" y="1.5" width="9" height="7" fill="none" stroke="#fff"/><rect x="0.5" y="0.5" width="3" height="4" fill="#0c1f2e" stroke="#fff"/><path d="M8 9V11M5 11.5H11" stroke="#fff"/></svg>
<svg style="position:absolute;left:1789px;top:1058px" width="14" height="13"><path d="M1 4.5H3.5L7 1.5V11.5L3.5 8.5H1Z" fill="none" stroke="#fff" stroke-width="1"/><path d="M8.5 4.5Q9.8 6.5 8.5 8.5M10 3Q12.2 6.5 10 10" stroke="#fff" fill="none"/></svg>
<div class="t" style="left:1810px;top:1058px;line-height:15px;color:#fff;">РУС</div>
<div class="t" style="left:1840px;top:1050.5px;line-height:15px;color:#fff;text-align:center">5:44 AM</div>
<div class="t" style="left:1837px;top:1064px;line-height:15px;color:#fff;">1/12/2024</div>
<svg style="position:absolute;left:1888px;top:1059px" width="14" height="14"><path d="M0.5 0.5H12.5V9.5H8L6.5 11.5L5 9.5H0.5Z" fill="none" stroke="#fff"/></svg>
<div style="position:absolute;left:703px;top:350px;width:514px;height:345px;box-shadow:0 2px 16px 2px rgba(0,0,0,.2);background:#f0f0f0;border:1px solid #5e9cd8"></div>
<div style="position:absolute;left:703px;top:350px;width:514px;height:23px;background:#0078d7"></div>
<svg style="position:absolute;left:709px;top:355px" width="13" height="13" viewBox="0 0 26 26"><circle cx="13" cy="13" r="12.6" fill="#6f7f86"/><circle cx="13" cy="13" r="11" fill="#a3b4bc"/><rect x="5" y="6" width="4.5" height="6" rx="1.5" fill="#e22b2b"/><rect x="5" y="12" width="4.5" height="3" fill="#4a78b8"/><rect x="5" y="15" width="4.5" height="5" rx="1" fill="#d42424"/><ellipse cx="11" cy="13" rx="3" ry="8" fill="#eed69a"/><rect x="15.5" y="6" width="5" height="7" rx="2" fill="#dd3030"/><rect x="14.5" y="12.5" width="5" height="8" rx="2" fill="#3f6fb5"/><rect x="19" y="10" width="3" height="4" rx="1.5" fill="#a01818"/><circle cx="3.5" cy="12" r="2" fill="#d8c0a0"/></svg>
<div class="t" style="left:726px;top:354px;line-height:15px;color:#fff;font-size:10.5px">Apply Script</div>
<svg style="position:absolute;left:1200px;top:356px" width="10" height="10"><path d="M0.5 0.5L9 9M9 0.5L0.5 9" stroke="#fff" stroke-width="1.1"/></svg>
<div class="t" style="left:710px;top:380px;line-height:15px;">Filter</div>
<div style="position:absolute;left:711px;top:392px;width:4px;height:1px;background:#000"></div>
<div class="inp" style="left:735px;top:381px;width:415px;height:16px"></div>
<div class="t" style="left:710px;top:401px;line-height:15px;">Script</div>
<div class="inp" style="left:735px;top:401px;width:415px;height:16px;background:#e5f1fb;border-color:#0078d7"></div>
<div class="t" style="left:737px;top:401px;line-height:15px;">Report masters</div>
<svg style="position:absolute;left:1137px;top:406px" width="10" height="6"><path d="M1 1L5 5L9 1" stroke="#444" stroke-width="1" fill="none"/></svg>
<div class="btn" style="left:1155px;top:400px;width:55px;height:18px"></div>
<div class="t" style="left:1172px;top:402px;line-height:15px;">Save</div>
<div class="chk" style="left:735px;top:421px;border-color:#333"></div>
<div class="t" style="left:746px;top:417.5px;line-height:15px;transform:scaleX(0.82)">Include scripts from subdirectories</div>
<div style="position:absolute;left:704px;top:440px;width:512px;height:213px;background:#fff;border:1px solid #0078d7"></div>
<div style="position:absolute;left:705px;top:441px;width:496px;height:198px;overflow:hidden"><div class="c" style="left:2px;top:3.5px">{
  List records and elements that require selected master files.
  Can be used to deal with references before using &quot;Clean masters&quot; function.
}
unit ReportMasters;

var
  slCheckMasters, sl: TStringList;

function Initialize: integer;
begin
  slCheckMasters := TStringList.Create;
  sl := TStringList.Create;
  sl.Duplicates := dupIgnore;
  sl.Sorted := True;
end;

function HasCheckMasters(sl: TStrings): Boolean;
var</div></div>
<div style="position:absolute;left:707px;top:443px;width:1px;height:11px;background:#000"></div>
<div style="position:absolute;left:1202px;top:441px;width:13px;height:198px;background:#f0f0f0"></div>
<svg style="position:absolute;left:1203px;top:443px" width="11" height="9"><path d="M2 6L5.5 2.5L9 6" stroke="#606060" stroke-width="1.3" fill="none"/></svg>
<div style="position:absolute;left:1203px;top:455px;width:11px;height:33px;background:#cdcdcd"></div>
<svg style="position:absolute;left:1203px;top:628px" width="11" height="9"><path d="M2 2.5L5.5 6L9 2.5" stroke="#606060" stroke-width="1.3" fill="none"/></svg>
<div style="position:absolute;left:705px;top:639px;width:510px;height:13px;background:#f0f0f0"></div>
<svg style="position:absolute;left:708px;top:640px" width="9" height="10"><path d="M6 1.5L2.5 5L6 8.5" stroke="#606060" stroke-width="1.3" fill="none"/></svg>
<div style="position:absolute;left:718px;top:640px;width:405px;height:11px;background:#cdcdcd"></div>
<svg style="position:absolute;left:1191px;top:640px" width="9" height="10"><path d="M3 1.5L6.5 5L3 8.5" stroke="#606060" stroke-width="1.3" fill="none"/></svg>
<div class="t" style="left:709px;top:653px;line-height:15px;font-size:9.5px;transform:scaleX(0.78)">Line: 1 Col: 1</div>
<div style="position:absolute;left:704px;top:667px;width:512px;height:1px;background:#f7f7f7"></div>
<div class="btn" style="left:1094px;top:673px;width:55px;height:18px"></div>
<div class="t" style="left:1115px;top:675px;line-height:15px;">OK</div>
<div class="btn" style="left:1155px;top:673px;width:55px;height:18px"></div>
<div class="t" style="left:1169px;top:675px;line-height:15px;">Cancel</div>
<div id="vid" style="position:absolute;left:1433px;top:766px;width:465px;height:262px;background:#596560;overflow:hidden;box-shadow:0 0 3px rgba(0,0,0,.35)">
<svg width="465" height="262" viewBox="0 0 465 262">
<defs>
<pattern id="bl1" width="6" height="5" patternUnits="userSpaceOnUse" patternTransform="rotate(-6)"><rect width="6" height="5" fill="#b8bc9c"/><rect y="3.4" width="6" height="1.6" fill="#3e4844"/></pattern>
<pattern id="bl2" width="6" height="5" patternUnits="userSpaceOnUse" patternTransform="rotate(-8)"><rect width="6" height="5" fill="#a4aeac"/><rect y="3.3" width="6" height="1.7" fill="#4c5553"/></pattern>
<pattern id="bl3" width="6" height="5" patternUnits="userSpaceOnUse" patternTransform="rotate(-12)"><rect width="6" height="5" fill="#dfe6e2"/><rect y="3" width="6" height="2" fill="#7c8a86"/></pattern>
<pattern id="bl4" width="6" height="5" patternUnits="userSpaceOnUse" patternTransform="rotate(-12)"><rect width="6" height="5" fill="#e4eadc"/><rect y="3.4" width="6" height="1.6" fill="#66746e"/></pattern>
<pattern id="bl5" width="6" height="4" patternUnits="userSpaceOnUse" patternTransform="rotate(10)"><rect width="6" height="4" fill="#c8d2dc"/><rect y="2.5" width="6" height="1.5" fill="#6a7888"/></pattern>
<linearGradient id="rw" x1="0" y1="0" x2="0" y2="1"><stop offset="0" stop-color="#606c66"/><stop offset="1" stop-color="#48524e"/></linearGradient>
<linearGradient id="lw" x1="0" y1="0" x2="0" y2="1"><stop offset="0" stop-color="#47524e"/><stop offset="1" stop-color="#3e4845"/></linearGradient>
</defs>
<rect width="465" height="262" fill="#56625d"/>
<!-- ceiling -->
<path d="M85 0H376V20L320 90H175L85 15Z" fill="#97a298"/>
<g stroke="#3a463f" stroke-width="1" fill="none">
<path d="M105 0L195 80M160 0L215 80M295 0L275 80M352 0L300 80"/>
<path d="M85 4H376M90 13H372M105 22H362M125 31H350M140 40H340M155 49H330M168 58H320M178 67H312M186 76H305"/>
</g>
<!-- left wall -->
<rect x="0" y="0" width="85" height="262" fill="url(#lw)"/>
<!-- blinds -->
<rect x="85" y="13" width="23" height="249" fill="url(#bl1)"/>
<rect x="108" y="18" width="4" height="244" fill="#6f7c74"/>
<rect x="112" y="26" width="15" height="236" fill="url(#bl2)"/>
<rect x="127" y="39" width="28" height="223" fill="#8d998f"/>
<rect x="155" y="56" width="12" height="206" fill="url(#bl3)"/>
<rect x="167" y="64" width="19" height="198" fill="#909c92"/>
<rect x="186" y="80" width="10" height="182" fill="url(#bl5)"/>
<!-- right side -->
<rect x="288" y="70" width="21" height="192" fill="#bfc4ac"/>
<rect x="309" y="56" width="14" height="206" fill="url(#bl5)"/>
<rect x="323" y="26" width="17" height="236" fill="#8e9a92"/>
<rect x="340" y="7" width="32" height="255" fill="url(#bl4)"/>
<rect x="372" y="0" width="11" height="262" fill="#4b5651"/>
<rect x="383" y="0" width="82" height="262" fill="url(#rw)"/>
<!-- neck -->
<path d="M211 112L282 112L286 172L250 186L214 172Z" fill="#b4713e"/>
<path d="M211 112L240 140L228 160L214 150Z" fill="#c38a68"/>
<!-- face -->
<path d="M204 40L288 36L290 80L284 110L276 124L262 138L246 144L232 138L216 124L208 104L203 80Z" fill="#c8967c"/>
<path d="M268 36L288 36L290 80L284 110L276 124L262 138L252 142L258 120L272 112L266 100L262 80L272 60Z" fill="#ad6a3a"/>
<!-- eyebrows/eyes/nose/mouth -->
<path d="M206 67L222 64L238 68L238 72L222 69L207 71Z M254 68L270 65L286 67L285 70L256 72Z" fill="#1a1410"/>
<path d="M255 74L278 73L275 78L258 79Z" fill="#c8d8e0"/>
<path d="M212 76L236 77L236 78L213 78Z" fill="#3a2418"/>
<path d="M240 102L250 102L246 106Z" fill="#9a5a38"/>
<path d="M228 120L262 119L258 126L234 127Z" fill="#a86040"/>
<!-- hair -->
<path d="M192 17L198 4L205 -1L292 -1L300 8L301 40L298 60L292 72L286 64L282 40L274 32L268 52L262 40L258 58L252 42L246 60L240 44L234 58L228 42L222 52L216 36L210 48L205 68L199 70L193 52Z" fill="#141414"/>
<!-- earbuds -->
<ellipse cx="199" cy="83" rx="5.5" ry="9" fill="#1a1a1a"/>
<ellipse cx="292" cy="81" rx="5" ry="9" fill="#1a1a1a"/>
<!-- shirt -->
<path d="M206 133L228 160L250 186L270 160L286 124L290 262H214Z" fill="#dfe6e2"/>
<path d="M270 165L286 140L280 262H270Z" fill="#b6b8c8" opacity="0.85"/>
<!-- tie -->
<path d="M226 176L259 176L254 192L266 262H226L234 192Z" fill="#5a2620"/>
<!-- suit -->
<path d="M80 262L84 235L92 212L100 195L127 182L159 168L177 152L190 143L206 133L212 180L216 262Z" fill="#1f1f22"/>
<path d="M286 124L300 132L327 153L376 185L402 199L414 214L420 235L423 262H271L280 190Z" fill="#1f1f22"/>
<!-- watermark -->
<text x="0" y="0" font-family="Liberation Sans" font-size="16" fill="#c8c8c8" fill-opacity="0.85" transform="translate(322 253.5) scale(0.74 1)" textLength="190" lengthAdjust="spacingAndGlyphs">YouTube.com/MHRcartoon</text>
</svg>

</div>
</body></html>
